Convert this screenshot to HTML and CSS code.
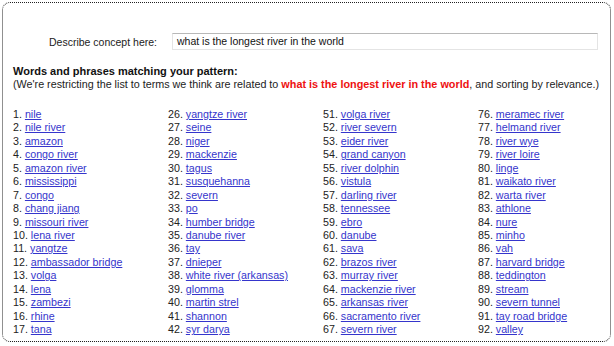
FILE: index.html
```html
<!DOCTYPE html>
<html>
<head>
<meta charset="utf-8">
<link rel="stylesheet" href="styles.css">
</head>
<body>
<div class="frame">
  <div class="concept">
    <span class="concept-label">Describe concept here:</span>
    <div class="concept-input">what is the longest river in the world</div>
  </div>
  <div class="heading">Words and phrases matching your pattern:</div>
  <div class="note">(We're restricting the list to terms we think are related to <b class="hl">what is the longest river in the world</b>, and sorting by relevance.)</div>
  <div class="results">
    <div class="col">
      <div>1. <a href="#">nile</a></div>
      <div>2. <a href="#">nile river</a></div>
      <div>3. <a href="#">amazon</a></div>
      <div>4. <a href="#">congo river</a></div>
      <div>5. <a href="#">amazon river</a></div>
      <div>6. <a href="#">mississippi</a></div>
      <div>7. <a href="#">congo</a></div>
      <div>8. <a href="#">chang jiang</a></div>
      <div>9. <a href="#">missouri river</a></div>
      <div>10. <a href="#">lena river</a></div>
      <div>11. <a href="#">yangtze</a></div>
      <div>12. <a href="#">ambassador bridge</a></div>
      <div>13. <a href="#">volga</a></div>
      <div>14. <a href="#">lena</a></div>
      <div>15. <a href="#">zambezi</a></div>
      <div>16. <a href="#">rhine</a></div>
      <div>17. <a href="#">tana</a></div>
    </div>
    <div class="col">
      <div>26. <a href="#">yangtze river</a></div>
      <div>27. <a href="#">seine</a></div>
      <div>28. <a href="#">niger</a></div>
      <div>29. <a href="#">mackenzie</a></div>
      <div>30. <a href="#">tagus</a></div>
      <div>31. <a href="#">susquehanna</a></div>
      <div>32. <a href="#">severn</a></div>
      <div>33. <a href="#">po</a></div>
      <div>34. <a href="#">humber bridge</a></div>
      <div>35. <a href="#">danube river</a></div>
      <div>36. <a href="#">tay</a></div>
      <div>37. <a href="#">dnieper</a></div>
      <div>38. <a href="#">white river (arkansas)</a></div>
      <div>39. <a href="#">glomma</a></div>
      <div>40. <a href="#">martin strel</a></div>
      <div>41. <a href="#">shannon</a></div>
      <div>42. <a href="#">syr darya</a></div>
    </div>
    <div class="col">
      <div>51. <a href="#">volga river</a></div>
      <div>52. <a href="#">river severn</a></div>
      <div>53. <a href="#">eider river</a></div>
      <div>54. <a href="#">grand canyon</a></div>
      <div>55. <a href="#">river dolphin</a></div>
      <div>56. <a href="#">vistula</a></div>
      <div>57. <a href="#">darling river</a></div>
      <div>58. <a href="#">tennessee</a></div>
      <div>59. <a href="#">ebro</a></div>
      <div>60. <a href="#">danube</a></div>
      <div>61. <a href="#">sava</a></div>
      <div>62. <a href="#">brazos river</a></div>
      <div>63. <a href="#">murray river</a></div>
      <div>64. <a href="#">mackenzie river</a></div>
      <div>65. <a href="#">arkansas river</a></div>
      <div>66. <a href="#">sacramento river</a></div>
      <div>67. <a href="#">severn river</a></div>
    </div>
    <div class="col">
      <div>76. <a href="#">meramec river</a></div>
      <div>77. <a href="#">helmand river</a></div>
      <div>78. <a href="#">river wye</a></div>
      <div>79. <a href="#">river loire</a></div>
      <div>80. <a href="#">linge</a></div>
      <div>81. <a href="#">waikato river</a></div>
      <div>82. <a href="#">warta river</a></div>
      <div>83. <a href="#">athlone</a></div>
      <div>84. <a href="#">nure</a></div>
      <div>85. <a href="#">minho</a></div>
      <div>86. <a href="#">vah</a></div>
      <div>87. <a href="#">harvard bridge</a></div>
      <div>88. <a href="#">teddington</a></div>
      <div>89. <a href="#">stream</a></div>
      <div>90. <a href="#">severn tunnel</a></div>
      <div>91. <a href="#">tay road bridge</a></div>
      <div>92. <a href="#">valley</a></div>
    </div>
  </div>
</div>
</body>
</html>
```

FILE: styles.css
```css
html, body {
  margin: 0;
  padding: 0;
  background: #ffffff;
}
body {
  font-family: "Liberation Sans", Arial, sans-serif;
  font-size: 10.5px;
  color: #1a1a1a;
}
.frame {
  box-sizing: border-box;
  margin: 2px 0 0 2px;
  width: 609px;
  height: 340px;
  border: 1px dotted #222;
  border-radius: 8px;
  overflow: hidden;
  padding: 30px 0 0 10px;
}
.concept {
  display: flex;
  align-items: center;
  margin-left: 36px;
  height: 17px;
}
.concept-label {
  width: 123px;
  flex: none;
  color: #222;
}
.concept-input {
  box-sizing: border-box;
  width: 426px;
  height: 17px;
  line-height: 15px;
  padding-left: 4px;
  border: 1px solid #e4e4e4;
  border-top-color: #b8b8b8;
  color: #111;
}
.heading {
  margin-top: 15px;
  font-size: 11px;
  font-weight: bold;
  line-height: 13.45px;
  color: #111;
}
.note {
  font-size: 10.75px;
  line-height: 13.45px;
  color: #222;
  white-space: nowrap;
}
.hl {
  font-size: 10.85px;
  color: #ee1111;
}
.results {
  display: flex;
  margin-top: 16px;
}
.col {
  width: 155px;
  flex: none;
  font-size: 10.7px;
  line-height: 13.45px;
  color: #222;
}
.col a {
  color: #3535cc;
  text-decoration: underline;
}
```
